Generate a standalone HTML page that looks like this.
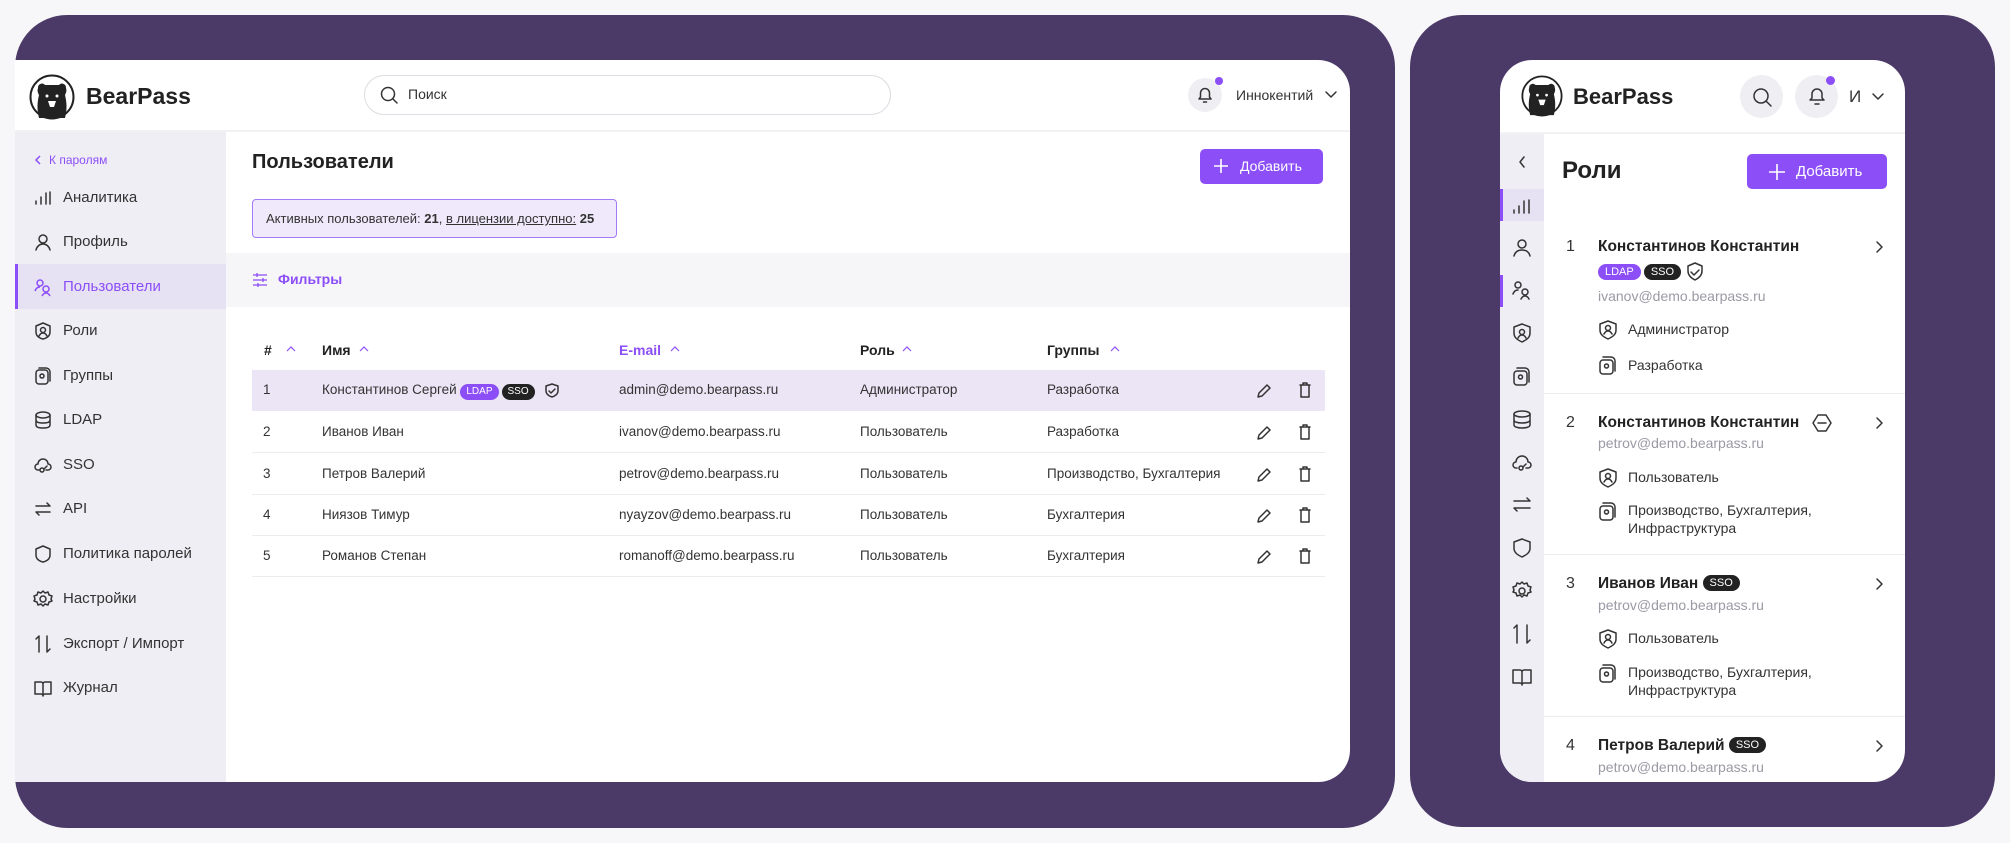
<!DOCTYPE html>
<html><head><meta charset="utf-8"><style>
*{box-sizing:border-box;margin:0;padding:0}
body{width:2010px;height:843px;background:#f7f7f9;font-family:"Liberation Sans","Noto Sans CJK SC",sans-serif;color:#222;position:relative;overflow:hidden}
.abs{position:absolute}
.panel{position:absolute;background:#4b3a67;border-radius:52px}
.t{position:absolute;white-space:nowrap}
svg{position:absolute;overflow:visible}
.ic{fill:none;stroke:#333;stroke-width:1.5;stroke-linecap:round;stroke-linejoin:round}
.badge{display:inline-block;border-radius:9px;color:#fff;font-size:10px;padding:2px 6px;line-height:12px}
.row{position:absolute;left:252px;width:1073px;height:41px;border-bottom:1px solid #ececf0}
.row .t{top:12px;font-size:13.5px;color:#333}
.item2{position:absolute;left:1544px;width:361px;border-bottom:1px solid #ececf0}
.nm{font-size:15.5px;font-weight:bold;color:#222}
</style></head><body>

<div class="panel" style="left:15px;top:15px;width:1380px;height:813px"></div>
<div class="panel" style="left:1410px;top:15px;width:585px;height:812px"></div>

<!-- CARD 1 -->
<div class="abs" style="left:15px;top:60px;width:1335px;height:722px;border-radius:0 32px 32px 0;overflow:hidden;background:#fff">
 <div class="abs" style="left:0;top:70px;width:1335px;height:2px;background:#f2f2f5"></div>
 <div class="abs" style="left:0;top:72px;width:211px;height:650px;background:#efeef5"></div>
 <div class="abs" style="left:0;top:204px;width:211px;height:45px;background:#e7e2f3;border-left:3px solid #8c4ef7"></div>
 <div class="abs" style="left:211px;top:193px;width:1124px;height:54px;background:#f6f6f8"></div>
</div>
<svg width="46" height="46" style="left:29px;top:74px" viewBox="0 0 46 46"><circle cx="23" cy="23" r="21.5" fill="#fff" stroke="#222" stroke-width="2"/><path d="M9 14a4 4 0 0 1 7-3h14a4 4 0 0 1 7 3c1 3 0 5-1 7c2 8 2 15 0 23h-26c-2-8-2-15 0-23c-1-2-2-4-1-7z" fill="#222"/><circle cx="18" cy="22" r="1.5" fill="#fff"/><circle cx="28" cy="22" r="1.5" fill="#fff"/><path d="M19 27h8l-2 6h-4z" fill="#fff"/></svg>
<div class="t" style="left:86px;top:83px;font-size:23px;font-weight:bold;color:#222">BearPass</div>
<div class="abs" style="left:364px;top:75px;width:527px;height:40px;border:1.5px solid #dcdce2;border-radius:20px"></div>
<svg width="18" height="18" style="left:380px;top:86px"><circle cx="8" cy="8" r="6.5" class="ic"/><path d="M13 13l4 4" class="ic"/></svg>
<div class="t" style="left:408px;top:86px;font-size:14px;color:#333">Поиск</div>
<div class="abs" style="left:1188px;top:78px;width:34px;height:34px;border-radius:50%;background:#efeef3"></div>
<svg width="16" height="18" style="left:1197px;top:86px"><path d="M2 13h12l-1.5-2V7a4.5 4.5 0 0 0-9 0v4z M6.5 16h3" class="ic"/></svg>
<div class="abs" style="left:1215px;top:77px;width:8px;height:8px;border-radius:50%;background:#8c4ef7"></div>
<div class="t" style="left:1236px;top:87px;font-size:14px;color:#333">Иннокентий</div>
<svg width="12" height="8" style="left:1325px;top:91px"><path d="M1 1l5 5 5-5" class="ic"/></svg>

<svg width="8" height="10" style="left:34px;top:155px"><path d="M6 1L2 5l4 4" fill="none" stroke="#8c4ef7" stroke-width="1.5"/></svg>
<div class="t" style="left:49px;top:153px;font-size:12px;color:#8c4ef7">К паролям</div>
<div class="t" style="left:63px;top:189px;font-size:15px;color:#333">Аналитика</div>
<div class="t" style="left:63px;top:233px;font-size:15px;color:#333">Профиль</div>
<div class="t" style="left:63px;top:278px;font-size:15px;color:#8c4ef7">Пользователи</div>
<div class="t" style="left:63px;top:322px;font-size:15px;color:#333">Роли</div>
<div class="t" style="left:63px;top:367px;font-size:15px;color:#333">Группы</div>
<div class="t" style="left:63px;top:411px;font-size:15px;color:#333">LDAP</div>
<div class="t" style="left:63px;top:456px;font-size:15px;color:#333">SSO</div>
<div class="t" style="left:63px;top:500px;font-size:15px;color:#333">API</div>
<div class="t" style="left:63px;top:545px;font-size:15px;color:#333">Политика паролей</div>
<div class="t" style="left:63px;top:590px;font-size:15px;color:#333">Настройки</div>
<div class="t" style="left:63px;top:635px;font-size:15px;color:#333">Экспорт / Импорт</div>
<div class="t" style="left:63px;top:679px;font-size:15px;color:#333">Журнал</div>
<svg width="18" height="18" style="left:34px;top:189px"><path d="M2 12v3M7 8v7M12 4v11M16 3v12" class="ic"/></svg>
<svg width="18" height="18" style="left:34px;top:233px"><circle cx="9" cy="6" r="4" class="ic"/><path d="M2 17c1-4 4-6 7-6s6 2 7 6" class="ic"/></svg>
<svg width="18" height="18" style="left:34px;top:278px"><circle cx="6" cy="5" r="3" stroke="#8c4ef7" fill="none" stroke-width="1.5"/><circle cx="12" cy="11" r="3" stroke="#8c4ef7" fill="none" stroke-width="1.5"/><path d="M1 13c1-3 3-4 5-4M8 18c1-2 2-3 4-3s3 1 4 3" stroke="#8c4ef7" fill="none" stroke-width="1.5"/></svg>
<svg width="18" height="18" style="left:34px;top:322px"><path d="M9 1l7 3v6c0 4-3 6-7 7c-4-1-7-3-7-7V4z" class="ic"/><circle cx="9" cy="8" r="2.5" class="ic"/><path d="M5 14c1-2 2-3 4-3s3 1 4 3" class="ic"/></svg>
<svg width="18" height="18" style="left:34px;top:367px"><rect x="2" y="3" width="12" height="14" rx="3" class="ic"/><path d="M5 1h7a4 4 0 0 1 4 4v9" class="ic"/><circle cx="8" cy="9" r="2" class="ic"/></svg>
<svg width="18" height="18" style="left:34px;top:411px"><ellipse cx="9" cy="4" rx="7" ry="3" class="ic"/><path d="M2 4v10c0 2 3 3 7 3s7-1 7-3V4M2 9c0 2 3 3 7 3s7-1 7-3" class="ic"/></svg>
<svg width="18" height="18" style="left:34px;top:456px"><path d="M5 14H4a3 3 0 0 1 0-6a5 5 0 0 1 10 0a3 3 0 0 1 0 6h-2" class="ic"/><circle cx="8" cy="14" r="2" class="ic"/><path d="M10 13l3-3" class="ic"/></svg>
<svg width="18" height="18" style="left:34px;top:500px"><path d="M2 6h14l-3-3M16 12H2l3 3" class="ic"/></svg>
<svg width="18" height="18" style="left:34px;top:545px"><path d="M9 1l7 3v6c0 4-3 6-7 7c-4-1-7-3-7-7V4z" class="ic"/></svg>
<svg width="18" height="18" style="left:34px;top:590px"><circle cx="9" cy="9" r="3" class="ic"/><path d="M9 1l2 2 3-1 1 3 3 1-1 3 1 2-3 1-1 3-3-1-2 2-2-2-3 1-1-3-3-1 1-2-1-3 3-1 1-3 3 1z" class="ic"/></svg>
<svg width="18" height="18" style="left:34px;top:635px"><path d="M5 17V1L2 4M13 1v16l3-3" class="ic"/></svg>
<svg width="18" height="18" style="left:34px;top:679px"><path d="M1 3h6a2 2 0 0 1 2 2v12a2 2 0 0 0-2-2H1zM17 3h-6a2 2 0 0 0-2 2v12a2 2 0 0 1 2-2h6z" class="ic"/></svg>

<div class="t" style="left:252px;top:151px;font-size:20px;font-weight:bold;color:#222">Пользователи</div>
<div class="abs" style="left:1200px;top:149px;width:123px;height:35px;background:#8c4ef7;border-radius:5px"></div>
<svg width="16" height="16" style="left:1213px;top:158px"><path d="M8 1v14M1 8h14" stroke="#fff" stroke-width="1.6"/></svg>
<div class="t" style="left:1240px;top:158px;font-size:14px;color:#fff">Добавить</div>
<div class="abs" style="left:252px;top:199px;width:365px;height:39px;border:1.5px solid #a37af7;background:#efe9fb;border-radius:4px"></div>
<div class="t" style="left:266px;top:211px;font-size:13px;color:#333">Активных пользователей: <b>21</b>, <span style="text-decoration:underline">в лицензии доступно:</span> <b>25</b></div>
<svg width="16" height="16" style="left:252px;top:272px"><path d="M1 3h14M1 8h14M1 13h14M5 1v4M11 6v4M6 11v4" stroke="#8c4ef7" stroke-width="1.3" fill="none"/></svg>
<div class="t" style="left:278px;top:271px;font-size:14px;font-weight:bold;color:#8c4ef7">Фильтры</div>

<div class="t" style="left:264px;top:342px;font-size:14px;font-weight:bold">#</div>
<div class="t" style="left:322px;top:342px;font-size:14px;font-weight:bold">Имя</div>
<div class="t" style="left:619px;top:342px;font-size:14px;font-weight:bold;color:#8c4ef7">E-mail</div>
<div class="t" style="left:860px;top:342px;font-size:14px;font-weight:bold">Роль</div>
<div class="t" style="left:1047px;top:342px;font-size:14px;font-weight:bold">Группы</div>
<svg width="10" height="6" style="left:286px;top:346px"><path d="M1 5l4-4 4 4" stroke="#8c4ef7" fill="none" stroke-width="1.2"/></svg>
<svg width="10" height="6" style="left:359px;top:346px"><path d="M1 5l4-4 4 4" stroke="#8c4ef7" fill="none" stroke-width="1.2"/></svg>
<svg width="10" height="6" style="left:670px;top:346px"><path d="M1 5l4-4 4 4" stroke="#8c4ef7" fill="none" stroke-width="1.2"/></svg>
<svg width="10" height="6" style="left:902px;top:346px"><path d="M1 5l4-4 4 4" stroke="#8c4ef7" fill="none" stroke-width="1.2"/></svg>
<svg width="10" height="6" style="left:1110px;top:346px"><path d="M1 5l4-4 4 4" stroke="#8c4ef7" fill="none" stroke-width="1.2"/></svg>

<div class="row" style="top:370px;background:#ebe5f5;border-bottom:none">
 <div class="t" style="left:11px">1</div><div class="t" style="left:70px">Константинов Сергей <span class="badge" style="background:#8c4ef7">LDAP</span><span class="badge" style="background:#222;margin-left:3px">SSO</span></div>
 <div class="t" style="left:367px">admin@demo.bearpass.ru</div><div class="t" style="left:608px">Администратор</div><div class="t" style="left:795px">Разработка</div>
</div>
<svg width="14" height="16" style="left:545px;top:383px"><path d="M7 1l6 2v5c0 3-3 5-6 6c-3-1-6-3-6-6V3z M4 8l2 2 4-4" class="ic" stroke-width="1.2"/></svg>
<div class="row" style="top:412px"><div class="t" style="left:11px">2</div><div class="t" style="left:70px">Иванов Иван</div><div class="t" style="left:367px">ivanov@demo.bearpass.ru</div><div class="t" style="left:608px">Пользователь</div><div class="t" style="left:795px">Разработка</div></div>
<div class="row" style="top:454px"><div class="t" style="left:11px">3</div><div class="t" style="left:70px">Петров Валерий</div><div class="t" style="left:367px">petrov@demo.bearpass.ru</div><div class="t" style="left:608px">Пользователь</div><div class="t" style="left:795px">Производство, Бухгалтерия</div></div>
<div class="row" style="top:495px"><div class="t" style="left:11px">4</div><div class="t" style="left:70px">Ниязов Тимур</div><div class="t" style="left:367px">nyayzov@demo.bearpass.ru</div><div class="t" style="left:608px">Пользователь</div><div class="t" style="left:795px">Бухгалтерия</div></div>
<div class="row" style="top:536px"><div class="t" style="left:11px">5</div><div class="t" style="left:70px">Романов Степан</div><div class="t" style="left:367px">romanoff@demo.bearpass.ru</div><div class="t" style="left:608px">Пользователь</div><div class="t" style="left:795px">Бухгалтерия</div></div>
<svg width="16" height="16" style="left:1256px;top:383px"><path d="M2 14l1-4 8-8 3 3-8 8z" class="ic" stroke-width="1.2"/></svg>
<svg width="12" height="16" style="left:1299px;top:382px"><path d="M1 3h10M4 3V1h4v2M2 3v12h8V3" class="ic" stroke-width="1.2"/></svg>
<svg width="16" height="16" style="left:1256px;top:425px"><path d="M2 14l1-4 8-8 3 3-8 8z" class="ic" stroke-width="1.2"/></svg>
<svg width="12" height="16" style="left:1299px;top:424px"><path d="M1 3h10M4 3V1h4v2M2 3v12h8V3" class="ic" stroke-width="1.2"/></svg>
<svg width="16" height="16" style="left:1256px;top:467px"><path d="M2 14l1-4 8-8 3 3-8 8z" class="ic" stroke-width="1.2"/></svg>
<svg width="12" height="16" style="left:1299px;top:466px"><path d="M1 3h10M4 3V1h4v2M2 3v12h8V3" class="ic" stroke-width="1.2"/></svg>
<svg width="16" height="16" style="left:1256px;top:508px"><path d="M2 14l1-4 8-8 3 3-8 8z" class="ic" stroke-width="1.2"/></svg>
<svg width="12" height="16" style="left:1299px;top:507px"><path d="M1 3h10M4 3V1h4v2M2 3v12h8V3" class="ic" stroke-width="1.2"/></svg>
<svg width="16" height="16" style="left:1256px;top:549px"><path d="M2 14l1-4 8-8 3 3-8 8z" class="ic" stroke-width="1.2"/></svg>
<svg width="12" height="16" style="left:1299px;top:548px"><path d="M1 3h10M4 3V1h4v2M2 3v12h8V3" class="ic" stroke-width="1.2"/></svg>

<!-- CARD 2 -->
<div class="abs" style="left:1500px;top:60px;width:405px;height:722px;background:#fff;border-radius:32px;overflow:hidden">
 <div class="abs" style="left:0;top:72px;width:405px;height:2px;background:#f2f2f5"></div>
 <div class="abs" style="left:0;top:74px;width:44px;height:648px;background:#efeef5"></div>
 <div class="abs" style="left:0;top:129px;width:44px;height:32px;background:#e7e2f3;border-left:3px solid #8c4ef7"></div>
 <div class="abs" style="left:0;top:215px;width:3px;height:32px;background:#8c4ef7"></div>
</div>
<svg width="42" height="42" style="left:1521px;top:75px" viewBox="0 0 46 46"><circle cx="23" cy="23" r="21.5" fill="#fff" stroke="#222" stroke-width="2"/><path d="M9 14a4 4 0 0 1 7-3h14a4 4 0 0 1 7 3c1 3 0 5-1 7c2 8 2 15 0 23h-26c-2-8-2-15 0-23c-1-2-2-4-1-7z" fill="#222"/><circle cx="18" cy="22" r="1.5" fill="#fff"/><circle cx="28" cy="22" r="1.5" fill="#fff"/><path d="M19 27h8l-2 6h-4z" fill="#fff"/></svg>
<div class="t" style="left:1573px;top:84px;font-size:22px;font-weight:bold;color:#222">BearPass</div>
<div class="abs" style="left:1740px;top:75px;width:43px;height:43px;border-radius:50%;background:#efeef3"></div>
<svg width="20" height="20" style="left:1752px;top:87px"><circle cx="9" cy="9" r="7" class="ic"/><path d="M14 14l5 5" class="ic"/></svg>
<div class="abs" style="left:1795px;top:75px;width:43px;height:43px;border-radius:50%;background:#efeef3"></div>
<svg width="18" height="20" style="left:1808px;top:86px"><path d="M2 14h14l-2-2V8a5 5 0 0 0-10 0v4z M7 18h4" class="ic"/></svg>
<div class="abs" style="left:1826px;top:76px;width:9px;height:9px;border-radius:50%;background:#8c4ef7"></div>
<div class="t" style="left:1849px;top:87px;font-size:17px;color:#333">И</div>
<svg width="12" height="8" style="left:1872px;top:93px"><path d="M1 1l5 5 5-5" class="ic"/></svg>

<svg width="8" height="12" style="left:1518px;top:156px"><path d="M6 1L2 6l4 5" class="ic"/></svg>
<svg width="20" height="20" style="left:1512px;top:196px"><path d="M2 14v3M7 10v7M12 5v12M17 4v13" class="ic"/></svg>
<svg width="20" height="20" style="left:1512px;top:238px"><circle cx="10" cy="6" r="4" class="ic"/><path d="M2 18c1-4 4-6 8-6s7 2 8 6" class="ic"/></svg>
<svg width="20" height="20" style="left:1512px;top:280px"><circle cx="6" cy="5" r="3" class="ic"/><circle cx="13" cy="12" r="3" class="ic"/><path d="M1 14c1-3 3-4 5-4M9 19c1-2 2-3 4-3s3 1 4 3" class="ic"/></svg>
<svg width="20" height="20" style="left:1512px;top:323px"><path d="M10 1l8 3v6c0 5-4 7-8 9c-4-2-8-4-8-9V4z" class="ic"/><circle cx="10" cy="9" r="2.5" class="ic"/><path d="M6 15c1-2 2-3 4-3s3 1 4 3" class="ic"/></svg>
<svg width="20" height="20" style="left:1512px;top:367px"><rect x="2" y="4" width="13" height="14" rx="3" class="ic"/><path d="M5 1h8a4 4 0 0 1 4 4v10" class="ic"/><circle cx="8.5" cy="10" r="2" class="ic"/></svg>
<svg width="20" height="20" style="left:1512px;top:410px"><ellipse cx="10" cy="4" rx="8" ry="3" class="ic"/><path d="M2 4v11c0 2 4 3 8 3s8-1 8-3V4M2 10c0 2 4 3 8 3s8-1 8-3" class="ic"/></svg>
<svg width="20" height="20" style="left:1512px;top:453px"><path d="M5 15H4a3 3 0 0 1 0-6a6 6 0 0 1 12 0a3 3 0 0 1 0 6h-2" class="ic"/><circle cx="9" cy="15" r="2" class="ic"/><path d="M11 14l3-3" class="ic"/></svg>
<svg width="20" height="20" style="left:1512px;top:495px"><path d="M2 6h16l-3-3M18 13H2l3 3" class="ic"/></svg>
<svg width="20" height="20" style="left:1512px;top:538px"><path d="M10 1l8 3v6c0 5-4 7-8 9c-4-2-8-4-8-9V4z" class="ic"/></svg>
<svg width="20" height="20" style="left:1512px;top:581px"><circle cx="10" cy="10" r="3" class="ic"/><path d="M10 1l2 2 3-1 1 3 3 1-1 3 1 2-3 1-1 3-3-1-2 2-2-2-3 1-1-3-3-1 1-2-1-3 3-1 1-3 3 1z" class="ic"/></svg>
<svg width="20" height="20" style="left:1512px;top:624px"><path d="M5 19V1L2 4M15 1v18l3-3" class="ic"/></svg>
<svg width="20" height="20" style="left:1512px;top:667px"><path d="M1 3h7a2 2 0 0 1 2 2v13a2 2 0 0 0-2-2H1zM19 3h-7a2 2 0 0 0-2 2v13a2 2 0 0 1 2-2h7z" class="ic"/></svg>

<div class="t" style="left:1562px;top:157px;font-size:24px;font-weight:bold;color:#222">Роли</div>
<div class="abs" style="left:1747px;top:154px;width:140px;height:35px;background:#8c4ef7;border-radius:5px"></div>
<svg width="18" height="18" style="left:1768px;top:163px"><path d="M9 1v16M1 9h16" stroke="#fff" stroke-width="1.6"/></svg>
<div class="t" style="left:1796px;top:163px;font-size:15px;color:#fff">Добавить</div>

<div class="item2" style="top:393px;height:1px"></div>
<div class="item2" style="top:554px;height:1px"></div>
<div class="item2" style="top:716px;height:1px"></div>
<div class="t" style="left:1566px;top:238px;font-size:16px;color:#333">1</div>
<div class="t nm" style="left:1598px;top:238px">Константинов Константин</div>
<div class="t" style="left:1598px;top:264px;font-size:11px"><span class="badge" style="background:#8c4ef7;font-size:11px;padding:2px 7px">LDAP</span> <span class="badge" style="background:#222;font-size:11px;padding:2px 7px">SSO</span></div>
<svg width="18" height="20" style="left:1686px;top:262px"><path d="M9 1l7 3v5c0 4-3 7-7 9c-4-2-7-5-7-9V4z M5 10l3 3 5-5" class="ic" stroke-width="1.3"/></svg>
<div class="t" style="left:1598px;top:288px;font-size:14px;color:#9a9aa5">ivanov@demo.bearpass.ru</div>
<div class="t" style="left:1628px;top:321px;font-size:14px;color:#333">Администратор</div>
<div class="t" style="left:1628px;top:357px;font-size:14px;color:#333">Разработка</div>
<div class="t" style="left:1566px;top:414px;font-size:16px;color:#333">2</div>
<div class="t nm" style="left:1598px;top:414px">Константинов Константин</div>
<svg width="20" height="18" style="left:1812px;top:414px"><path d="M6 1h8l5 8-5 8H6L1 9z M6 9h8" class="ic" stroke-width="1.3"/></svg>
<div class="t" style="left:1598px;top:435px;font-size:14px;color:#9a9aa5">petrov@demo.bearpass.ru</div>
<div class="t" style="left:1628px;top:469px;font-size:14px;color:#333">Пользователь</div>
<div class="t" style="left:1628px;top:501px;font-size:14px;color:#333;line-height:18px">Производство, Бухгалтерия,<br>Инфраструктура</div>
<div class="t" style="left:1566px;top:575px;font-size:16px;color:#333">3</div>
<div class="t nm" style="left:1598px;top:575px">Иванов Иван <span class="badge" style="background:#222;font-size:11px;padding:2px 7px;font-weight:normal;vertical-align:2px">SSO</span></div>
<div class="t" style="left:1598px;top:597px;font-size:14px;color:#9a9aa5">petrov@demo.bearpass.ru</div>
<div class="t" style="left:1628px;top:630px;font-size:14px;color:#333">Пользователь</div>
<div class="t" style="left:1628px;top:663px;font-size:14px;color:#333;line-height:18px">Производство, Бухгалтерия,<br>Инфраструктура</div>
<div class="t" style="left:1566px;top:737px;font-size:16px;color:#333">4</div>
<div class="t nm" style="left:1598px;top:737px">Петров Валерий <span class="badge" style="background:#222;font-size:11px;padding:2px 7px;font-weight:normal;vertical-align:2px">SSO</span></div>
<div class="t" style="left:1598px;top:759px;font-size:14px;color:#9a9aa5">petrov@demo.bearpass.ru</div>
<svg width="20" height="20" style="left:1598px;top:320px"><path d="M10 1l8 3v6c0 5-4 7-8 9c-4-2-8-4-8-9V4z" class="ic"/><circle cx="10" cy="8" r="2.5" class="ic"/><path d="M6 14c1-2 2-3 4-3s3 1 4 3" class="ic"/></svg>
<svg width="20" height="20" style="left:1598px;top:356px"><rect x="2" y="4" width="13" height="14" rx="3" class="ic"/><path d="M5 1h8a4 4 0 0 1 4 4v10" class="ic"/><circle cx="8.5" cy="10" r="2" class="ic"/></svg>
<svg width="20" height="20" style="left:1598px;top:468px"><path d="M10 1l8 3v6c0 5-4 7-8 9c-4-2-8-4-8-9V4z" class="ic"/><circle cx="10" cy="8" r="2.5" class="ic"/><path d="M6 14c1-2 2-3 4-3s3 1 4 3" class="ic"/></svg>
<svg width="20" height="20" style="left:1598px;top:502px"><rect x="2" y="4" width="13" height="14" rx="3" class="ic"/><path d="M5 1h8a4 4 0 0 1 4 4v10" class="ic"/><circle cx="8.5" cy="10" r="2" class="ic"/></svg>
<svg width="20" height="20" style="left:1598px;top:629px"><path d="M10 1l8 3v6c0 5-4 7-8 9c-4-2-8-4-8-9V4z" class="ic"/><circle cx="10" cy="8" r="2.5" class="ic"/><path d="M6 14c1-2 2-3 4-3s3 1 4 3" class="ic"/></svg>
<svg width="20" height="20" style="left:1598px;top:664px"><rect x="2" y="4" width="13" height="14" rx="3" class="ic"/><path d="M5 1h8a4 4 0 0 1 4 4v10" class="ic"/><circle cx="8.5" cy="10" r="2" class="ic"/></svg>
<svg width="8" height="12" style="left:1875px;top:241px"><path d="M2 1l5 5-5 5" class="ic"/></svg>
<svg width="8" height="12" style="left:1875px;top:417px"><path d="M2 1l5 5-5 5" class="ic"/></svg>
<svg width="8" height="12" style="left:1875px;top:578px"><path d="M2 1l5 5-5 5" class="ic"/></svg>
<svg width="8" height="12" style="left:1875px;top:740px"><path d="M2 1l5 5-5 5" class="ic"/></svg>
</body></html>
